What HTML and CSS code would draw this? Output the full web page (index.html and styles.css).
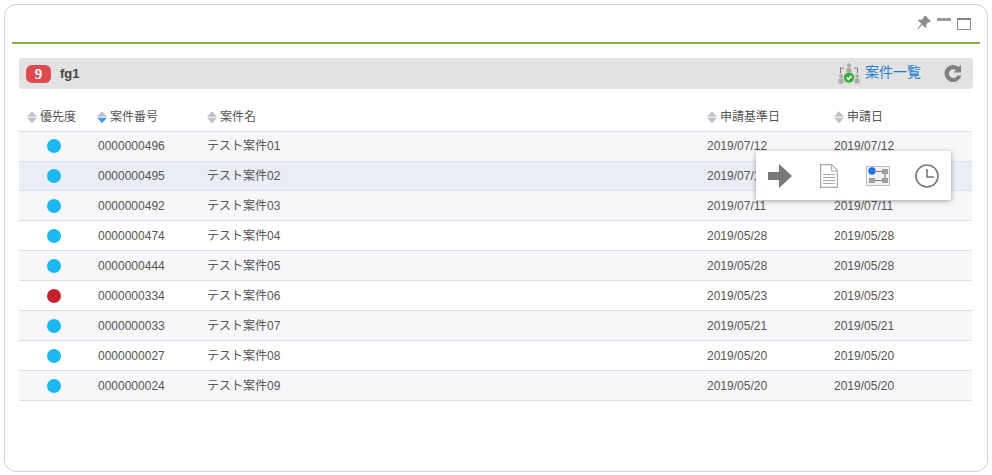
FILE: index.html
```html
<!DOCTYPE html>
<html lang="ja">
<head>
<meta charset="utf-8">
<title>案件一覧</title>
<link rel="stylesheet" href="styles.css">
</head>
<body>
<div class="panel">
  <div class="toolbar">
    <svg class="tool-pin" width="16" height="16" viewBox="0 0 16 16"><path fill="#8f8f8f" d="M9.600 1 15 6.200l-1 1-1-.4-2.700 2.600.2 2.600-1 1L6.300 9.800 1.600 14.600 1 14l4.300-5.200L1.900 5.600l1-1 2.700.2 2.500-2.700-.4-1z"/></svg>
    <span class="tool-min"></span>
    <span class="tool-max"></span>
  </div>
  <div class="body">
    <div class="bar">
      <span class="badge">9</span>
      <span class="bar-name">fg1</span>
      <a class="bar-link">
        <svg width="22" height="21" viewBox="0 0 22 21">
          <g fill="#a9a9a9"><circle cx="11" cy="2.200" r="2"/><path d="M8.500 9V6q0-1.500 1.500-1.500h2q1.500 0 1.500 1.500v3z"/><circle cx="3" cy="13" r="2"/><path d="M.5 20.500v-3.500q0-1.500 1.500-1.500h2q1.500 0 1.500 1.500v3.500z"/><circle cx="19" cy="13" r="2"/><path d="M16.500 20.500v-3.500q0-1.500 1.500-1.500h2q1.500 0 1.500 1.500v3.500z"/></g>
          <path fill="none" stroke="#777" d="M2.500 10V5h3.500M19.500 10V5H16"/>
          <circle cx="11" cy="14.500" r="5.200" fill="#3cae3c"/>
          <path fill="none" stroke="#fff" stroke-width="1.500" d="M8.800 14.500l1.700 1.800 2.800-3.300"/>
        </svg>
        <span class="link-text">案件一覧</span>
      </a>
      <svg class="refresh" width="20" height="19" viewBox="0 0 20 20"><path fill="#808080" d="M10 1a9 9 0 0 1 5.800 2.100L18.500 .8V9h-7.800l2.500-2.600A4.600 4.600 0 1 0 14.500 12h4.300A9 9 0 1 1 10 1z"/></svg>
    </div>
    <table class="grid">
      <thead>
        <tr>
          <th class="col-pri"><span class="sort"></span>優先度</th>
          <th class="col-num"><span class="sort sort-active"></span>案件番号</th>
          <th class="col-name"><span class="sort"></span>案件名</th>
          <th class="col-base"><span class="sort"></span>申請基準日</th>
          <th class="col-date"><span class="sort"></span>申請日</th>
        </tr>
      </thead>
      <tbody>
        <tr><td><span class="dot"></span></td><td class="cell-num">0000000496</td><td>テスト案件01</td><td>2019/07/12</td><td>2019/07/12</td></tr>
        <tr class="hover"><td><span class="dot"></span></td><td class="cell-num">0000000495</td><td>テスト案件02</td><td>2019/07/12</td><td>2019/07/12</td></tr>
        <tr><td><span class="dot"></span></td><td class="cell-num">0000000492</td><td>テスト案件03</td><td>2019/07/11</td><td>2019/07/11</td></tr>
        <tr><td><span class="dot"></span></td><td class="cell-num">0000000474</td><td>テスト案件04</td><td>2019/05/28</td><td>2019/05/28</td></tr>
        <tr><td><span class="dot"></span></td><td class="cell-num">0000000444</td><td>テスト案件05</td><td>2019/05/28</td><td>2019/05/28</td></tr>
        <tr><td><span class="dot dot-red"></span></td><td class="cell-num">0000000334</td><td>テスト案件06</td><td>2019/05/23</td><td>2019/05/23</td></tr>
        <tr><td><span class="dot"></span></td><td class="cell-num">0000000033</td><td>テスト案件07</td><td>2019/05/21</td><td>2019/05/21</td></tr>
        <tr><td><span class="dot"></span></td><td class="cell-num">0000000027</td><td>テスト案件08</td><td>2019/05/20</td><td>2019/05/20</td></tr>
        <tr><td><span class="dot"></span></td><td class="cell-num">0000000024</td><td>テスト案件09</td><td>2019/05/20</td><td>2019/05/20</td></tr>
      </tbody>
    </table>
  </div>
  <div class="popup">
    <svg class="pop-arrow" width="24" height="24" viewBox="0 0 24 24"><path fill="#777" d="M0 8h11V0l13 12-13 12v-8H0z"/></svg>
    <svg class="pop-doc" width="18" height="24" viewBox="0 0 18 24"><path fill="#fff" stroke="#a9a9b1" stroke-width="1.200" d="M.6.6h11l5.800 6v16.800H.6z"/><path fill="none" stroke="#a9a9b1" d="M11.500.6V7h6M3 10.500h12M3 13.500h12M3 16.500h12M3 19.500h12"/></svg>
    <svg class="pop-flow" width="24" height="20" viewBox="0 0 24 20"><rect x=".5" y=".5" width="23" height="19" fill="#f1f1f3" stroke="#bcbcc2"/><rect x="3" y="12" width="6" height="5" fill="#a0a0a0"/><rect x="16" y="3" width="6" height="5" fill="#a0a0a0"/><rect x="16" y="12" width="6" height="5" fill="#a0a0a0"/><path fill="none" stroke="#777" d="M10 5.500h6M9 14.500h7M19 8v4"/><circle cx="6" cy="5" r="3.700" fill="#2272e4"/></svg>
    <svg class="pop-clock" width="24" height="24" viewBox="0 0 24 24"><circle cx="12" cy="12" r="11" fill="#fff" stroke="#777" stroke-width="1.600"/><path fill="none" stroke="#777" stroke-width="1.600" d="M12 5v8h7"/></svg>
  </div>
</div>
</body>
</html>
```
FILE: styles.css
```css
* { box-sizing: border-box; }
html, body { margin: 0; padding: 0; background: #fff; }
body {
  width: 992px;
  height: 475px;
  padding: 4px;
  overflow: hidden;
  font-family: "Liberation Sans", "Noto Sans CJK JP", sans-serif;
  font-size: 12px;
  color: #555;
}
.panel {
  position: relative;
  width: 984px;
  height: 468px;
  border: 1px solid #d2d2d2;
  border-radius: 12px;
  padding: 0 7px;
}
.toolbar {
  height: 39px;
  border-bottom: 2px solid #8aab4e;
  display: flex;
  justify-content: flex-end;
  align-items: flex-start;
  padding: 10px 0 0;
}
.tool-pin { margin-right: 5px; }
.tool-min { width: 14px; height: 3px; background: #999; margin: 3px 6px 0 0; }
.tool-max { width: 14px; height: 12px; border: 1px solid #888; border-top-width: 2px; margin: 3px 9px 0 0; }
.body { padding: 14px 7px 0; }
.bar {
  height: 31px;
  background: #e2e2e2;
  border-radius: 3px;
  display: flex;
  align-items: center;
  padding: 0 10px 0 7px;
}
.badge {
  width: 25px;
  height: 18px;
  background: #dd4b50;
  border-radius: 6px;
  color: #fff;
  font: bold 15px/18px "Liberation Serif", serif;
  text-align: center;
}
.bar-name { margin-left: 9px; font-size: 13px; font-weight: bold; color: #444; }
.bar-link {
  margin-left: auto;
  display: flex;
  align-items: center;
  color: #1f7fd0;
  font-size: 14px;
  line-height: 16px;
}
.link-text { margin-left: 5px; padding-bottom: 3px; }
.refresh { margin-left: 22px; }
.grid {
  width: 953px;
  margin-top: 11px;
  border-collapse: collapse;
  table-layout: fixed;
}
.grid th {
  height: 31px;
  padding: 4px 0 0;
  text-align: left;
  font-weight: normal;
  line-height: 16px;
  color: #555;
  border-bottom: 1px solid #dedfea;
}
.col-pri { width: 78px; padding-left: 8px !important; }
.col-num { width: 110px; }
.col-name { width: 500px; }
.col-base { width: 127px; }
.sort {
  display: inline-block;
  width: 10px;
  height: 12px;
  margin-right: 3px;
  vertical-align: -2px;
  background: #bfc0c8;
  clip-path: polygon(50% 0, 100% 46%, 0 46%, 0 54%, 100% 54%, 50% 100%, 0 54%, 0 46%);
}
.sort-active {
  background: linear-gradient(#bfc0c8 50%, #4a9af0 50%);
}
.grid td {
  height: 30px;
  padding: 0;
  line-height: 16px;
  color: #555;
  border-bottom: 1px solid #dedfea;
}
.grid .cell-num { padding-left: 1px; }
.grid tbody tr:nth-child(odd) { background: #f7f7fa; }
.grid tbody tr.hover { background: #e9edf5; }
.grid tbody tr.hover td { height: 29px; padding-top: 1px; }
.grid tbody tr.hover ~ tr td { padding-top: 2px; }
.grid td:first-child { padding-left: 28px; }
.dot {
  display: block;
  width: 14px;
  height: 14px;
  border-radius: 50%;
  background: #1cb8ef;
}
.dot-red { background: #c5232b; }
.popup {
  position: absolute;
  left: 751px;
  top: 146px;
  width: 195px;
  height: 49px;
  background: #fff;
  box-shadow: 0 1px 5px rgba(0,0,0,.35);
  display: flex;
  align-items: center;
  padding: 0 0 0 12px;
}
.pop-doc { margin-left: 28px; }
.pop-flow { margin-left: 28px; }
.pop-clock { margin-left: 25px; }
```
